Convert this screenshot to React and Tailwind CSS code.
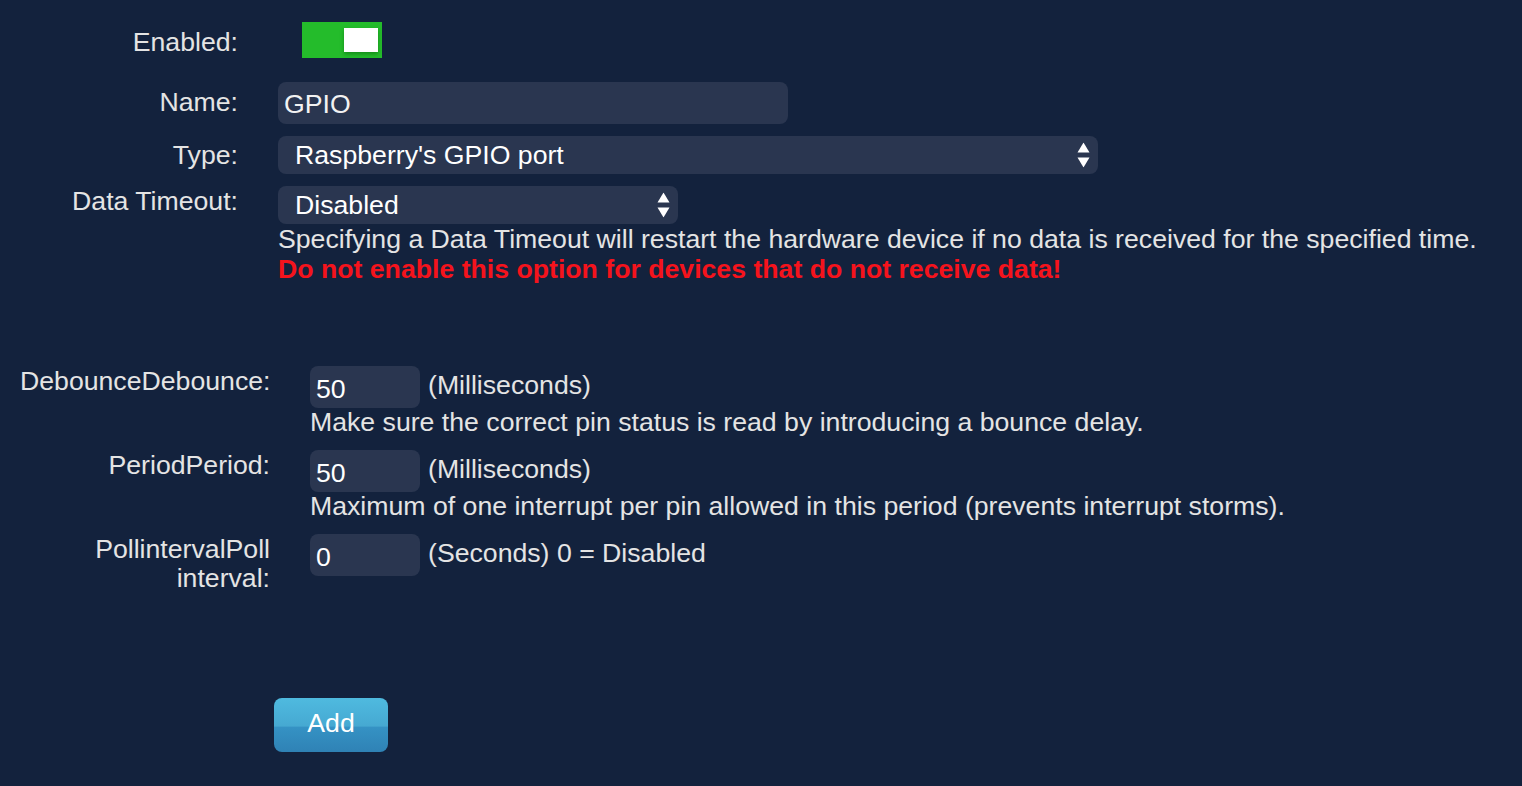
import React from "react";

function Arrows() {
  return (
    <svg width="13" height="25" viewBox="0 0 13 25" className="absolute right-[8px] top-1/2 -translate-y-1/2">
      <polygon points="6.5,0 12.5,10 0.5,10" fill="#ffffff" />
      <polygon points="0.5,15 12.5,15 6.5,25" fill="#ffffff" />
    </svg>
  );
}

export default function App() {
  return (
    <div
      className="w-[1522px] h-[786px] bg-[#13223d] text-[#e4e4e4] text-[26.67px] overflow-hidden"
      style={{ fontFamily: '"Liberation Sans", Arial, Helvetica, sans-serif' }}
    >
      {/* Upper section */}
      <div className="pt-[22px]">
        <div className="flex items-start">
          <div className="w-[238px] text-right leading-[30px] pt-[5px]">Enabled:</div>
          <div className="ml-[64px] w-[80px] h-[36px] bg-[#24bc2b] relative">
            <div className="absolute right-[4px] top-[6px] w-[34px] h-[24px] bg-white shadow-[0_2px_4px_rgba(0,80,0,0.45)]" />
          </div>
        </div>

        <div className="flex items-center mt-[24px]">
          <div className="w-[238px] text-right leading-[30px] pb-[2px]">Name:</div>
          <div className="ml-[40px] w-[510px] h-[42px] rounded-[8px] bg-[#2a3650] flex items-center pl-[6px] pt-[2px] text-[#f2f2f2] leading-[30px]">
            GPIO
          </div>
        </div>

        <div className="flex items-center mt-[12px]">
          <div className="w-[238px] text-right leading-[30px]">Type:</div>
          <div className="relative ml-[40px] w-[820px] h-[38px] rounded-[8px] bg-[#2a3650] flex items-center pl-[17px] text-white leading-[30px]">
            Raspberry's GPIO port
            <Arrows />
          </div>
        </div>

        <div className="flex items-start mt-[12px]">
          <div className="w-[238px] text-right leading-[30px]">Data Timeout:</div>
          <div className="ml-[40px] flex flex-col">
            <div className="relative w-[400px] h-[38px] rounded-[8px] bg-[#2a3650] flex items-center pl-[17px] text-white leading-[30px]">
              Disabled
              <Arrows />
            </div>
            <div className="leading-[30px] whitespace-nowrap">
              Specifying a Data Timeout will restart the hardware device if no data is received for the specified time.
            </div>
            <div className="leading-[30px] whitespace-nowrap font-bold text-[#f5131c]">
              Do not enable this option for devices that do not receive data!
            </div>
          </div>
        </div>
      </div>

      {/* Lower section */}
      <div className="mt-[82px]">
        <div className="flex items-start">
          <div className="ml-[20px] w-[250px] text-right leading-[29px] pt-[1px]">DebounceDebounce:</div>
          <div className="ml-[40px] flex flex-col">
            <div className="flex items-center">
              <div className="w-[110px] h-[42px] rounded-[8px] bg-[#2a3650] flex items-center pl-[6px] pt-[4px] text-white leading-[30px]">50</div>
              <div className="ml-[8px] leading-[30px] pb-[4px]">(Milliseconds)</div>
            </div>
            <div className="leading-[28px] mb-[14px] whitespace-nowrap">
              Make sure the correct pin status is read by introducing a bounce delay.
            </div>
          </div>
        </div>

        <div className="flex items-start">
          <div className="ml-[20px] w-[250px] text-right leading-[29px] pt-[1px]">PeriodPeriod:</div>
          <div className="ml-[40px] flex flex-col">
            <div className="flex items-center">
              <div className="w-[110px] h-[42px] rounded-[8px] bg-[#2a3650] flex items-center pl-[6px] pt-[4px] text-white leading-[30px]">50</div>
              <div className="ml-[8px] leading-[30px] pb-[4px]">(Milliseconds)</div>
            </div>
            <div className="leading-[28px] mb-[14px] whitespace-nowrap">
              Maximum of one interrupt per pin allowed in this period (prevents interrupt storms).
            </div>
          </div>
        </div>

        <div className="flex items-start">
          <div className="ml-[20px] w-[250px] text-right leading-[29px] pt-[1px]">PollintervalPoll interval:</div>
          <div className="ml-[40px] flex flex-col">
            <div className="flex items-center">
              <div className="w-[110px] h-[42px] rounded-[8px] bg-[#2a3650] flex items-center pl-[6px] pt-[4px] text-white leading-[30px]">0</div>
              <div className="ml-[8px] leading-[30px] pb-[4px]">(Seconds) 0 = Disabled</div>
            </div>
          </div>
        </div>
      </div>

      <div className="ml-[274px] mt-[105px]">
        <div className="w-[114px] h-[54px] rounded-[8px] bg-[linear-gradient(to_bottom,#4fbadf_0%,#46a9d2_52%,#3592c4_54%,#2f82b5_100%)] flex items-center justify-center pb-[4px] text-white leading-[30px]">
          Add
        </div>
      </div>
    </div>
  );
}
